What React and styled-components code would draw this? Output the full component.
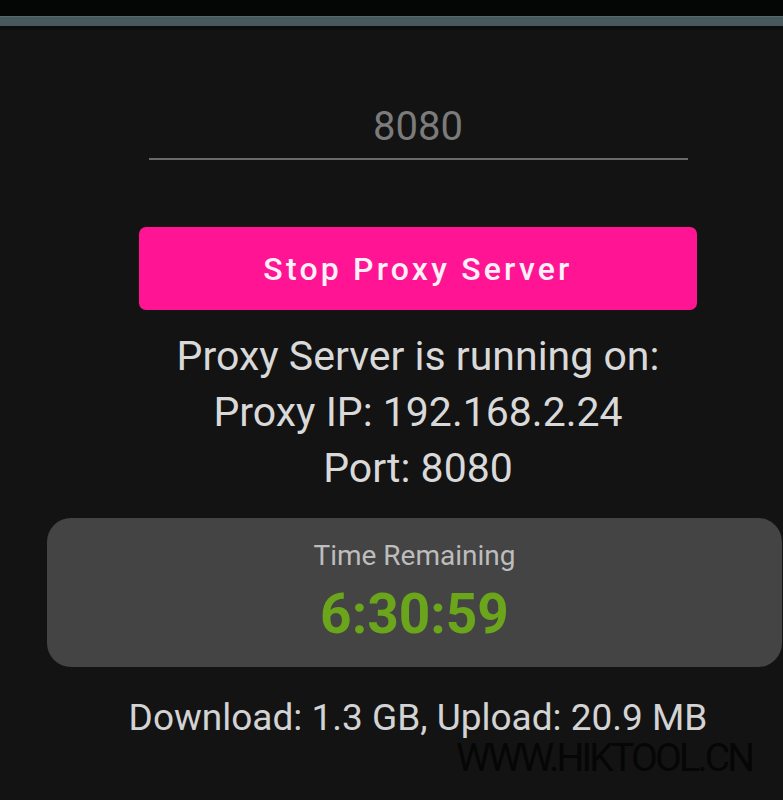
import styled, { createGlobalStyle } from "styled-components";

const Global = createGlobalStyle`
  html, body {
    margin: 0;
    padding: 0;
    background: #131313;
  }
  body {
    font-family: Roboto, "Noto Sans", sans-serif;
  }
`;

const Page = styled.div`
  position: relative;
  width: 783px;
  height: 800px;
  overflow: hidden;
  background: #131313;
`;

const StatusBar = styled.div`
  height: 16px;
  background: #040606;
`;

const Strip = styled.div`
  height: 8px;
  background: #45595f;
  border-top: 1px solid #5a6668;
  border-bottom: 1px solid #4d5557;
`;

const Shade = styled.div`
  height: 4px;
  background: #0b0e0d;
`;

const Content = styled.div`
  display: flex;
  flex-direction: column;
  align-items: center;
  padding: 72px 0 0 53px;
`;

const PortField = styled.div`
  width: 539px;
  border-bottom: 2px solid #6a6a6a;
  text-align: center;
  font-size: 40px;
  line-height: 50px;
  color: #7b7b7b;
  padding-bottom: 6px;
`;

const Button = styled.button`
  margin-top: 67px;
  width: 558px;
  height: 83px;
  border: none;
  border-radius: 7px;
  background: #ff1493;
  color: #fdf0f8;
  font-family: Roboto, sans-serif;
  font-weight: 500;
  font-size: 32px;
  letter-spacing: 3.2px;
`;

const Status = styled.div`
  margin-top: 18px;
  text-align: center;
  font-size: 41px;
  line-height: 56px;
  color: #d9d9d9;
`;

const Card = styled.div`
  margin: 22px 1px 0 47px;
  height: 149px;
  border-radius: 24px;
  background: #444444;
  display: flex;
  flex-direction: column;
  align-items: center;
  padding-top: 21px;
  box-sizing: border-box;
`;

const CardLabel = styled.div`
  font-size: 28px;
  line-height: 34px;
  color: #bdbdbd;
`;

const Timer = styled.div`
  margin-top: 11px;
  font-size: 55px;
  line-height: 60px;
  font-weight: 700;
  color: #6ba51b;
`;

const Traffic = styled.div`
  margin-top: 29px;
  padding-left: 53px;
  text-align: center;
  font-size: 37px;
  line-height: 44px;
  color: #d3d3d3;
`;

const Watermark = styled.div`
  position: absolute;
  left: 456px;
  top: 735px;
  font-size: 39px;
  line-height: 46px;
  letter-spacing: -2.8px;
  color: #060606;
`;

export default function App() {
  return (
    <Page>
      <Global />
      <StatusBar />
      <Strip />
      <Shade />
      <Content>
        <PortField>8080</PortField>
        <Button>Stop Proxy Server</Button>
        <Status>
          Proxy Server is running on:
          <br />
          Proxy IP: 192.168.2.24
          <br />
          Port: 8080
        </Status>
      </Content>
      <Card>
        <CardLabel>Time Remaining</CardLabel>
        <Timer>6:30:59</Timer>
      </Card>
      <Traffic>Download: 1.3 GB, Upload: 20.9 MB</Traffic>
      <Watermark>WWW.HIKTOOL.CN</Watermark>
    </Page>
  );
}
